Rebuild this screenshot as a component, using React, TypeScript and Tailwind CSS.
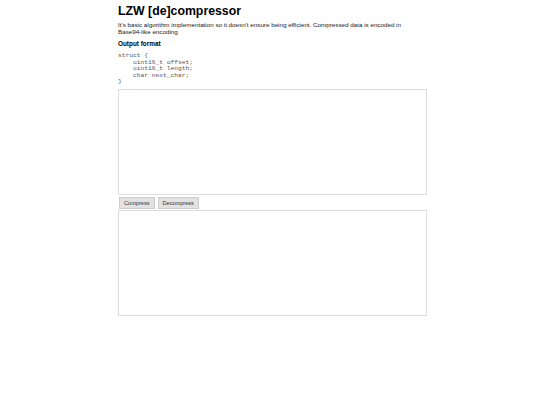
export default function App() {
  return (
    <div className="min-h-[405px] w-[540px] bg-white font-['Liberation_Sans',Arial,sans-serif] text-black">
      <div className="ml-[118px] w-[309px] pt-[4px]">
        <h1 className="text-[12.3px] leading-[15px] font-bold">LZW [de]compressor</h1>
        <p className="mt-[3px] max-w-[300px] text-[6.25px] leading-[6.5px] text-[#222]">
          It's basic algorithm implementation so it doesn't ensure being efficient. Compressed data is encoded in
          Base94-like encoding
        </p>
        <h2 className="mt-[5px] text-[6.4px] leading-[8px] font-bold">Output format</h2>
        <pre className="mt-[5px] font-['Liberation_Mono','Courier_New',monospace] text-[6.25px] leading-[6.5px] text-[#555]">
{`struct {
    uint16_t offset;
    uint16_t length;
    char next_char;
}`}
        </pre>
        <textarea className="mt-[3px] block h-[106px] w-[309px] resize-none border border-[#ddd] bg-white outline-none" />
        <div className="flex gap-[3px] pt-[2px] pl-[1px]">
          <button className="h-[12px] border border-[#ccc] bg-[#e2e2e2] px-[4px] text-[5.6px] leading-[10px] text-[#333]">
            Compress
          </button>
          <button className="h-[12px] border border-[#ccc] bg-[#e2e2e2] px-[4px] text-[5.6px] leading-[10px] text-[#333]">
            Decompress
          </button>
        </div>
        <textarea className="mt-[1px] block h-[106px] w-[309px] resize-none border border-[#ddd] bg-white outline-none" />
      </div>
    </div>
  )
}
